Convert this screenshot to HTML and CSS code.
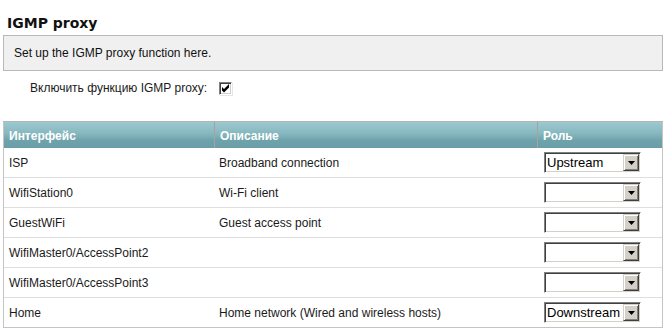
FILE: index.html
```html
<!DOCTYPE html>
<html>
	<head>
		<meta charset="utf-8" />
		<title>IGMP proxy</title>
		<link rel="stylesheet" href="styles.css">
	</head>
	<body>
		<div class="page">
			<h1 class="title">IGMP proxy</h1>
			<div class="note">Set up the IGMP proxy function here.</div>
			<div class="option">
				<span class="option_label">Включить функцию IGMP proxy:</span>
				<span class="checkbox">
					<svg width="9" height="9" viewBox="0 0 9 9"><path d="M1 3 L3 5 L8 0 L8 3.5 L3 8.5 L1 6.5 Z" fill="#000" /></svg>
				</span>
			</div>
			<table class="grid">
				<thead>
					<tr>
						<th class="col_name">Интерфейс</th>
						<th class="col_desc">Описание</th>
						<th class="col_role">Роль</th>
					</tr>
				</thead>
				<tbody>
					<tr>
						<td>ISP</td>
						<td>Broadband connection</td>
						<td><span class="select"><span class="select_value">Upstream</span><span class="select_arrow"><svg width="7" height="4" viewBox="0 0 7 4"><path d="M0 0 H7 L3.5 4 Z" fill="#000" /></svg></span></span></td>
					</tr>
					<tr>
						<td>WifiStation0</td>
						<td>Wi-Fi client</td>
						<td><span class="select"><span class="select_value"></span><span class="select_arrow"><svg width="7" height="4" viewBox="0 0 7 4"><path d="M0 0 H7 L3.5 4 Z" fill="#000" /></svg></span></span></td>
					</tr>
					<tr>
						<td>GuestWiFi</td>
						<td>Guest access point</td>
						<td><span class="select"><span class="select_value"></span><span class="select_arrow"><svg width="7" height="4" viewBox="0 0 7 4"><path d="M0 0 H7 L3.5 4 Z" fill="#000" /></svg></span></span></td>
					</tr>
					<tr>
						<td>WifiMaster0/AccessPoint2</td>
						<td></td>
						<td><span class="select"><span class="select_value"></span><span class="select_arrow"><svg width="7" height="4" viewBox="0 0 7 4"><path d="M0 0 H7 L3.5 4 Z" fill="#000" /></svg></span></span></td>
					</tr>
					<tr>
						<td>WifiMaster0/AccessPoint3</td>
						<td></td>
						<td><span class="select"><span class="select_value"></span><span class="select_arrow"><svg width="7" height="4" viewBox="0 0 7 4"><path d="M0 0 H7 L3.5 4 Z" fill="#000" /></svg></span></span></td>
					</tr>
					<tr>
						<td>Home</td>
						<td>Home network (Wired and wireless hosts)</td>
						<td><span class="select"><span class="select_value">Downstream</span><span class="select_arrow"><svg width="7" height="4" viewBox="0 0 7 4"><path d="M0 0 H7 L3.5 4 Z" fill="#000" /></svg></span></span></td>
					</tr>
				</tbody>
			</table>
		</div>
	</body>
</html>
```

FILE: styles.css
```css
body {
	margin: 0;
	background-color: #fff;
	color: #1a1a1a;
	font-family: "Liberation Sans", Arial, sans-serif;
	font-size: 12px;
}

.page {
	width: 660px;
	margin-left: 3px;
	padding-top: 15px;
}

.title {
	margin: 0 0 4px 4px;
	font-family: "DejaVu Sans", Verdana, sans-serif;
	font-size: 14px;
	font-weight: bold;
	line-height: 16px;
	color: #111;
}

.note {
	border: 1px solid #b8b8b8;
	background-color: #f0f0f0;
	padding: 10px;
	line-height: 14px;
	color: #111;
}

.option {
	display: flex;
	align-items: center;
	margin-top: 10px;
	padding-left: 27px;
	line-height: 14px;
}

.option_label {
	width: 189px;
}

.checkbox {
	display: flex;
	align-items: center;
	justify-content: center;
	box-sizing: border-box;
	width: 13px;
	height: 13px;
	background-color: #fff;
	border-top: 1px solid #808080;
	border-left: 1px solid #808080;
	border-right: 1px solid #fff;
	border-bottom: 1px solid #fff;
	box-shadow: inset 1px 1px #404040, inset -1px -1px #d4d0c8, 1px 1px #e6e6e6;
}

.grid {
	width: 660px;
	margin-top: 26px;
	table-layout: fixed;
	border-collapse: separate;
	border-spacing: 0;
	border: 1px solid #c4c4c4;
	border-top-color: #b4b4b4;
}

.grid th,
.grid td {
	box-sizing: border-box;
	padding: 0 5px;
	text-align: left;
	line-height: 14px;
}

.grid th {
	height: 26px;
	padding-top: 7px;
	padding-bottom: 5px;
	background: linear-gradient(#9dc9d0, #86b7bf 45%, #6fa3ac 70%, #6a9da6);
	color: #fff;
	font-weight: bold;
}

.grid th + th {
	border-left: 1px solid #a8a19e;
}

.col_name {
	width: 210px;
}

.col_desc {
	width: 323px;
}

.col_role {
	width: 125px;
}

.grid td {
	height: 30px;
	border-bottom: 1px solid #dedede;
	vertical-align: middle;
}

.grid tr:last-child td {
	height: 29px;
	border-bottom: none;
}

.select {
	display: flex;
	box-sizing: border-box;
	width: 97px;
	height: 21px;
	margin-left: 2px;
	background-color: #fff;
	border-top: 1px solid #808080;
	border-left: 1px solid #808080;
	border-right: 1px solid #fff;
	border-bottom: 1px solid #fff;
	box-shadow: inset 1px 1px #404040, inset -1px -1px #d4d0c8;
	padding: 1px;
}

.select_value {
	flex: 1;
	padding-left: 1px;
	font-size: 13px;
	line-height: 17px;
	color: #000;
	white-space: nowrap;
	overflow: hidden;
}

.select_arrow {
	display: flex;
	align-items: center;
	justify-content: center;
	box-sizing: border-box;
	width: 16px;
	height: 17px;
	background-color: #d4d0c8;
	border-top: 1px solid #d4d0c8;
	border-left: 1px solid #d4d0c8;
	border-right: 1px solid #404040;
	border-bottom: 1px solid #404040;
	box-shadow: inset 1px 1px #fff, inset -1px -1px #808080;
}
```
